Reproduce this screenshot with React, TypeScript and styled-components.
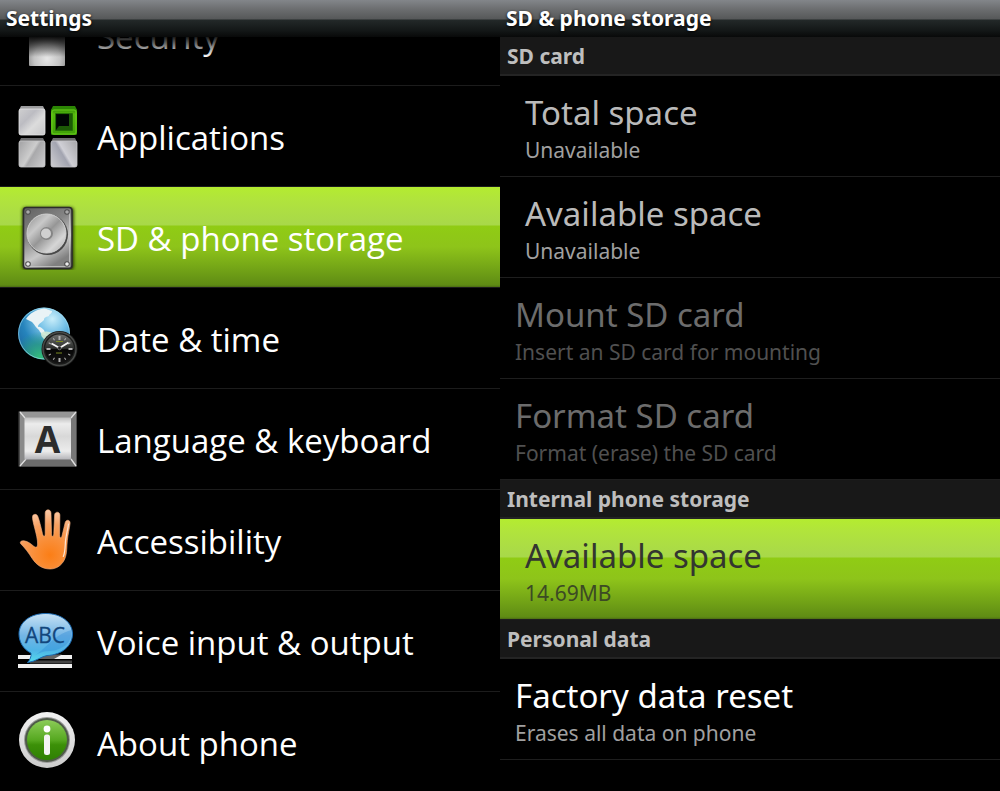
import React from "react";
import styled, { createGlobalStyle, css } from "styled-components";

const GlobalStyle = createGlobalStyle`
  *, *::before, *::after { box-sizing: border-box; }
  body {
    margin: 0;
    background: #000;
    color: #fff;
    font-family: "Noto Sans", "Open Sans", sans-serif;
  }
`;

const greenFill = css`
  background: linear-gradient(
    #b4ec30 0%,
    #b1e43c 12%,
    #a8d84a 38%,
    #90cc14 39%,
    #8ec41a 60%,
    #5f8c14 98%,
    #4c6c14 100%
  );
`;

const Screens = styled.div`
  display: grid;
  grid-template-columns: 1fr 1fr;
  height: 100vh;
  overflow: hidden;
`;

const Screen = styled.section`
  display: flex;
  flex-direction: column;
  min-width: 0;
  min-height: 0;
`;

const TitleBar = styled.h1`
  flex: none;
  height: 37px;
  margin: 0;
  padding-left: 6px;
  font-size: 21px;
  line-height: 36px;
  font-weight: 700;
  color: #fff;
  white-space: nowrap;
  text-shadow: 0 1px 3px #000;
  background: linear-gradient(#83868a 0, #6c6e70 9px, #565859 19px, #232929 20px, #141818 30px, #080909 37px);
`;

const Viewport = styled.div`
  position: relative;
  flex: 1;
  min-height: 0;
  overflow: hidden;
`;

const TopFade = styled.div`
  position: absolute;
  inset: 0 0 auto;
  height: 20px;
  background: linear-gradient(rgba(0, 0, 0, 0.9), rgba(0, 0, 0, 0));
  pointer-events: none;
`;

const MenuList = styled.ul<{ $scrolled?: number }>`
  list-style: none;
  margin: ${(p) => -(p.$scrolled ?? 0)}px 0 0;
  padding: 0;
`;

const MenuButton = styled.button<{ $selected?: boolean }>`
  display: flex;
  align-items: center;
  gap: 17px;
  width: 100%;
  height: 101px;
  padding: 0 0 0 14px;
  border: 0;
  border-bottom: 1px solid #1c1c1c;
  background: #000;
  color: #fff;
  font-family: "Open Sans", "Noto Sans", sans-serif;
  font-size: 33px;
  line-height: 44px;
  text-align: left;
  white-space: nowrap;
  ${(p) => p.$selected && greenFill}
`;

const MenuLabel = styled.span`
  padding-top: 3px;
`;

const Icon = styled.svg`
  flex: none;
  width: 66px;
  height: 66px;
`;

const Category = styled.h2`
  height: 39px;
  margin: 0;
  padding-left: 7px;
  border-bottom: 2px solid #242424;
  background: #181818;
  color: #bebebe;
  font-size: 21px;
  line-height: 38px;
  font-weight: 700;
  white-space: nowrap;
`;

type Tone = "info" | "disabled" | "selected" | "normal";

const tones: Record<Tone, { title: string; note: string; indent: number }> = {
  info: { title: "#bababa", note: "#a0a0a0", indent: 25 },
  disabled: { title: "#6c6c6c", note: "#505050", indent: 15 },
  selected: { title: "#333630", note: "#3c4a24", indent: 25 },
  normal: { title: "#ffffff", note: "#a0a0a0", indent: 15 },
};

const Preference = styled.button<{ $tone: Tone }>`
  display: flex;
  flex-direction: column;
  justify-content: center;
  width: 100%;
  height: 101px;
  padding: 4px 0 0 ${(p) => tones[p.$tone].indent}px;
  border: 0;
  border-bottom: 1px solid #1e1e1e;
  background: #000;
  font: inherit;
  text-align: left;
  white-space: nowrap;
  ${(p) => p.$tone === "selected" && greenFill}
`;

const PrefTitle = styled.span<{ $tone: Tone }>`
  font-size: 33px;
  line-height: 44px;
  color: ${(p) => tones[p.$tone].title};
`;

const PrefNote = styled.span<{ $tone: Tone }>`
  font-size: 21px;
  line-height: 30px;
  color: ${(p) => tones[p.$tone].note};
`;

const SecurityIcon = () => (
  <Icon viewBox="0 0 66 66" aria-hidden="true">
    <defs>
      <radialGradient id="lock" cx="50%" cy="82%" r="60%">
        <stop offset="0" stopColor="#e6e6e6" />
        <stop offset="0.6" stopColor="#c4c4c4" />
        <stop offset="1" stopColor="#8c8c8c" />
      </radialGradient>
    </defs>
    <rect x="15" y="24" width="36" height="40" rx="1" fill="url(#lock)" />
  </Icon>
);

const ApplicationsIcon = () => (
  <Icon viewBox="0 0 66 66" aria-hidden="true">
    <defs>
      <linearGradient id="tileA" x1="0" y1="0" x2="1" y2="1">
        <stop offset="0" stopColor="#cfcfd0" />
        <stop offset="0.35" stopColor="#bcbcc2" />
        <stop offset="0.6" stopColor="#dcdcdc" />
        <stop offset="1" stopColor="#c6c6c8" />
      </linearGradient>
      <linearGradient id="tileB" x1="0" y1="0.2" x2="1" y2="0.8">
        <stop offset="0" stopColor="#a8a8aa" />
        <stop offset="0.45" stopColor="#cdcdcd" />
        <stop offset="0.55" stopColor="#a9a9ab" />
        <stop offset="1" stopColor="#c8c8ca" />
      </linearGradient>
      <linearGradient id="tileC" x1="0" y1="0.8" x2="1" y2="0.2">
        <stop offset="0" stopColor="#c8c8cc" />
        <stop offset="0.45" stopColor="#a2a4b0" />
        <stop offset="0.55" stopColor="#d0d0d6" />
        <stop offset="1" stopColor="#adadb0" />
      </linearGradient>
      <linearGradient id="tileG" x1="0" y1="0" x2="0" y2="1">
        <stop offset="0" stopColor="#2f8c04" />
        <stop offset="0.2" stopColor="#56b80e" />
        <stop offset="1" stopColor="#3fa008" />
      </linearGradient>
    </defs>
    <path d="M7 3h22l2 4v23q0 2-2 2H7q-2 0-2-2V7z" fill="#9c9c9e" />
    <rect x="5" y="6" width="26" height="26" rx="2" fill="url(#tileA)" stroke="#e4e4e6" strokeWidth="0.8" />
    <path d="M39 3h22l2 4v23q0 2-2 2H39q-2 0-2-2V7z" fill="#2c8604" />
    <rect x="37" y="6" width="26" height="26" rx="2" fill="url(#tileG)" />
    <rect x="38" y="7" width="24" height="24" rx="2" fill="none" stroke="#69cc1c" strokeWidth="1" />
    <rect x="41" y="10" width="18" height="18" rx="1" fill="#247204" />
    <rect x="42" y="11" width="16" height="16" fill="#041002" />
    <path d="M42 27l3-4h10V11h3v16z" fill="#1c5a06" />
    <rect x="43" y="12" width="12" height="11" fill="#000604" />
    <path d="M7 35h22l2 4v23q0 2-2 2H7q-2 0-2-2V39z" fill="#6e6e70" />
    <rect x="5" y="38" width="26" height="26" rx="2" fill="url(#tileB)" stroke="#c6c6c8" strokeWidth="0.8" />
    <path d="M39 35h22l2 4v23q0 2-2 2H39q-2 0-2-2V39z" fill="#6e6e70" />
    <rect x="37" y="38" width="26" height="26" rx="2" fill="url(#tileC)" stroke="#c6c6ca" strokeWidth="0.8" />
  </Icon>
);

const StorageIcon = () => (
  <Icon viewBox="0 0 66 66" aria-hidden="true">
    <defs>
      <linearGradient id="driveBody" x1="0" y1="0" x2="0.5" y2="1">
        <stop offset="0" stopColor="#606060" />
        <stop offset="0.45" stopColor="#868686" />
        <stop offset="0.75" stopColor="#c8c8c8" />
        <stop offset="1" stopColor="#808080" />
      </linearGradient>
      <linearGradient id="platter" x1="0" y1="0" x2="1" y2="1">
        <stop offset="0" stopColor="#8c8c8c" />
        <stop offset="0.3" stopColor="#c9c9c9" />
        <stop offset="0.5" stopColor="#969696" />
        <stop offset="0.75" stopColor="#d6d6d6" />
        <stop offset="1" stopColor="#a4a4a4" />
      </linearGradient>
      <filter id="driveShadow" x="-20%" y="-20%" width="140%" height="140%">
        <feGaussianBlur stdDeviation="1.6" />
      </filter>
    </defs>
    <rect x="8" y="3" width="52" height="63" rx="4" fill="#1d2a04" opacity="0.8" filter="url(#driveShadow)" />
    <rect x="9.5" y="3.5" width="48.5" height="61" rx="3" fill="url(#driveBody)" stroke="#2c2c2c" strokeWidth="1.6" />
    <path d="M12 62.500h43.500V7" fill="none" stroke="#c8c8c8" strokeWidth="0.800" />
    <circle cx="33.5" cy="30.5" r="20.5" fill="#484848" />
    <circle cx="32.5" cy="29.5" r="19.5" fill="url(#platter)" stroke="#d2d2d2" strokeWidth="1" />
    <circle cx="32.5" cy="29.5" r="6.5" fill="#858585" />
    <circle cx="32" cy="29.5" r="5" fill="#d0d0d0" />
    {[
      [14, 8],
      [53, 8],
      [14, 60],
      [53, 60],
    ].map(([x, y]) => (
      <g key={`${x}-${y}`}>
        <circle cx={x} cy={y} r="2.8" fill="#4e4e4e" />
        <circle cx={x} cy={y} r="1.8" fill={y > 30 ? "#ececec" : "#a8a8a8"} />
      </g>
    ))}
  </Icon>
);

const DateIcon = () => (
  <Icon viewBox="0 0 66 66" aria-hidden="true">
    <defs>
      <radialGradient id="globe" cx="66%" cy="22%" r="82%">
        <stop offset="0" stopColor="#c9eefa" />
        <stop offset="0.34" stopColor="#74c0e6" />
        <stop offset="0.7" stopColor="#2684bc" />
        <stop offset="1" stopColor="#1c6aa4" />
      </radialGradient>
      <radialGradient id="globeGreen" cx="42%" cy="96%" r="50%">
        <stop offset="0" stopColor="#34c07a" />
        <stop offset="0.5" stopColor="#2c9c84" stopOpacity="0.8" />
        <stop offset="1" stopColor="#2c9c84" stopOpacity="0" />
      </radialGradient>
      <linearGradient id="dial" x1="0" y1="0" x2="0" y2="1">
        <stop offset="0" stopColor="#6a6c6a" />
        <stop offset="0.48" stopColor="#2c2e2c" />
        <stop offset="0.52" stopColor="#060606" />
        <stop offset="1" stopColor="#141414" />
      </linearGradient>
    </defs>
    <circle cx="30" cy="28.5" r="26" fill="url(#globe)" />
    <circle cx="30" cy="28.5" r="26" fill="url(#globeGreen)" />
    <circle cx="30" cy="28.5" r="25.4" fill="none" stroke="#a4e0f0" strokeWidth="1" opacity="0.6" />
    <path
      d="M12 14c4-6 10-9.500 18-10.500 4 .5 5 2 8 2.500 0 3-3 3-3 5-4 1-5 2-5 4-3 3-6 4-6 7 3-1 4 2 6 3 1 4 3 5 5 5-4 2-8-1-10-5-3-2-4-5-7-8-2-1-4-2-6-3z"
      fill="#e9f3f6"
    />
    <path d="M27 28c4-2 8-2 12 1l4 4-8 10c-4-4-3-7-6-10-2-2-2-3-2-5z" fill="#cfe9d4" opacity="0.9" />
    <circle cx="45.500" cy="44" r="18" fill="#1c1d1c" />
    <circle cx="45.500" cy="44" r="16.500" fill="none" stroke="#484a48" strokeWidth="1.400" />
    <circle cx="45.500" cy="44" r="14.500" fill="url(#dial)" />
    {Array.from({ length: 12 }, (_, i) => (
      <path
        key={i}
        d={i % 3 === 0 ? "M45.500 31v4" : "M45.500 31.500v2.500"}
        stroke="#b0b0b0"
        strokeWidth={i % 3 === 0 ? 2 : 1}
        transform={`rotate(${i * 30} 45.500 44)`}
      />
    ))}
    <path d="M37.500 38.500l8 4.500 9-5.500" fill="none" stroke="#f4f4f4" strokeWidth="2" strokeLinejoin="round" />
    <path d="M42 36.500h7M42 48h6" stroke="#7a8a20" strokeWidth="1" />
    <circle cx="45.500" cy="43" r="1.800" fill="#222" stroke="#999" strokeWidth="0.600" />
  </Icon>
);

const LanguageIcon = () => (
  <Icon viewBox="0 0 66 66" aria-hidden="true">
    <defs>
      <linearGradient id="keyFace" x1="0" y1="0" x2="0" y2="1">
        <stop offset="0" stopColor="#c0c0c0" />
        <stop offset="0.15" stopColor="#ececec" />
        <stop offset="0.45" stopColor="#d8d8d8" />
        <stop offset="0.8" stopColor="#ececec" />
        <stop offset="1" stopColor="#b4b4b8" />
      </linearGradient>
    </defs>
    <rect x="4.500" y="5" width="58.500" height="56" rx="1" fill="#4a4a4a" />
    <path d="M6 6h56l-5 6H11z" fill="#969696" />
    <path d="M6 6l5 6v42l-5 6z" fill="#8a8a8a" />
    <path d="M62 6l-5 6v42l5 6z" fill="#777" />
    <path d="M6 60l5-7h46l5 7z" fill="#6c6c6c" />
    <path d="M6 6l5 6M62 6l-5 6M6 60l6-7M62 60l-5-7" stroke="#e0e0e0" strokeWidth="1.300" />
    <rect x="10.500" y="11.500" width="46.500" height="42" rx="1" fill="url(#keyFace)" />
    <text x="33.500" y="47" textAnchor="middle" fontFamily="Open Sans, sans-serif" fontSize="37" fontWeight="700" fill="#2c2c2c">
      A
    </text>
  </Icon>
);

const HandIcon = () => (
  <Icon viewBox="0 0 66 66" aria-hidden="true">
    <defs>
      <radialGradient id="palm" gradientUnits="userSpaceOnUse" cx="36" cy="48" r="44">
        <stop offset="0" stopColor="#fb7e16" />
        <stop offset="0.35" stopColor="#f98e38" />
        <stop offset="0.7" stopColor="#f8a060" />
        <stop offset="1" stopColor="#fbc8a4" />
      </radialGradient>
    </defs>
    <path
      d="M6.500 36.500c-.8-2 1-3 3.500-2.700 4 .4 7.500 3.500 10 5.700 1.800 1.300 3.200.9 3.600-1.500.3-5-1.600-12-3.600-19.500-.8-3.500-1.700-7-1.500-8.800.3-2.800 4-3.200 5.200-.6 1.500 3.700 3 10 4.400 16 .4 2.500 1 4 1.800 4.200 1 .2 1.300-.8 1.300-2.500V6c0-4.200 5.600-4.200 5.800 0l.5 20.500c0 2 .4 2.800 1.100 2.800s1.100-1 1.200-2.600L40.600 8c.2-3.700 5.200-3.700 5.300 0l-.3 19.500c0 2.300.3 3.200 1 3.300.8.100 1.200-1 1.600-2.800l3-12.500c1-3.500 5.200-2.600 4.900.8-.6 5-2.100 11-2.800 17.500-.6 6-.3 11-1.600 15.500-2 7.500-8 12.700-15.500 12.700-8.500 0-14-4.500-18-10.500-3.500-5.500-6.700-10-11.700-15z"
      fill="url(#palm)"
      stroke="#f8b080"
      strokeWidth="0.600"
    />
    <path d="M54.500 17c-1 7-3 13-3.200 20-.2 5-.4 9-2 12.500" fill="none" stroke="#fde4d2" strokeWidth="1.200" strokeLinecap="round" />
  </Icon>
);

const VoiceIcon = () => (
  <Icon viewBox="0 0 66 66" aria-hidden="true">
    <defs>
      <linearGradient id="bubble" x1="0" y1="0" x2="0" y2="1">
        <stop offset="0" stopColor="#c8e2f4" />
        <stop offset="0.45" stopColor="#74b6e6" />
        <stop offset="0.75" stopColor="#4fb4e6" />
        <stop offset="1" stopColor="#54dcec" />
      </linearGradient>
    </defs>
    <path d="M4 47h54v4H4zM4 56h54v4H4z" fill="#f0f0f0" />
    <path d="M24 46.500h24l-8 4.500H17z" fill="#666" />
    <path d="M16 52.500h42v3H16z" fill="#444" />
    <path
      d="M31.800 5.500c15 0 26.700 8.500 26.700 20.500S47.500 47 33 47.500c-5 .6-12 6.500-19.500 7 2.500-2.500 4-6 3.500-9.500C9.500 41.500 5 34 5 26 5 14 16.500 5.500 31.800 5.500z"
      fill="url(#bubble)"
      stroke="#1c6cb4"
      strokeWidth="1"
    />
    <path d="M57.500 22c1 14-10 20-22 21-6 0-10 2-14 4 12-8 18-20 36-25z" fill="#2c86d4" opacity="0.350" />
    <text x="31" y="34.500" textAnchor="middle" fontFamily="Open Sans, sans-serif" fontSize="21" fill="#12467c" stroke="#12467c" strokeWidth="0.300">
      ABC
    </text>
  </Icon>
);

const AboutIcon = () => (
  <Icon viewBox="0 0 66 66" aria-hidden="true">
    <defs>
      <linearGradient id="aboutRing" x1="0" y1="0" x2="0" y2="1">
        <stop offset="0" stopColor="#f2f2f2" />
        <stop offset="1" stopColor="#cccccc" />
      </linearGradient>
      <linearGradient id="aboutFill" x1="0" y1="0" x2="0" y2="1">
        <stop offset="0" stopColor="#8ccc58" />
        <stop offset="0.5" stopColor="#56a820" />
        <stop offset="0.62" stopColor="#3c9008" />
        <stop offset="1" stopColor="#2f8004" />
      </linearGradient>
    </defs>
    <circle cx="33" cy="31" r="28" fill="url(#aboutRing)" />
    <circle cx="33" cy="31" r="23" fill="#9a9a9a" />
    <circle cx="33" cy="31" r="22" fill="#4e5a48" />
    <circle cx="33" cy="31" r="20" fill="url(#aboutFill)" />
    <circle cx="33" cy="20" r="3.400" fill="#fff" />
    <rect x="30" y="25.500" width="6" height="20.500" rx="2.500" fill="#f4f4f4" />
  </Icon>
);

const menu = [
  { label: "Security", icon: <SecurityIcon /> },
  { label: "Applications", icon: <ApplicationsIcon /> },
  { label: "SD & phone storage", icon: <StorageIcon />, selected: true },
  { label: "Date & time", icon: <DateIcon /> },
  { label: "Language & keyboard", icon: <LanguageIcon /> },
  { label: "Accessibility", icon: <HandIcon /> },
  { label: "Voice input & output", icon: <VoiceIcon /> },
  { label: "About phone", icon: <AboutIcon /> },
];

const groups: { name: string; items: { title: string; note: string; tone: Tone }[] }[] = [
  {
    name: "SD card",
    items: [
      { title: "Total space", note: "Unavailable", tone: "info" },
      { title: "Available space", note: "Unavailable", tone: "info" },
      { title: "Mount SD card", note: "Insert an SD card for mounting", tone: "disabled" },
      { title: "Format SD card", note: "Format (erase) the SD card", tone: "disabled" },
    ],
  },
  {
    name: "Internal phone storage",
    items: [{ title: "Available space", note: "14.69MB", tone: "selected" }],
  },
  {
    name: "Personal data",
    items: [{ title: "Factory data reset", note: "Erases all data on phone", tone: "normal" }],
  },
];

export default function App() {
  return (
    <>
      <GlobalStyle />
      <Screens>
        <Screen>
          <TitleBar>Settings</TitleBar>
          <Viewport>
            <MenuList $scrolled={52}>
              {menu.map((item) => (
                <li key={item.label}>
                  <MenuButton type="button" $selected={item.selected}>
                    {item.icon}
                    <MenuLabel>{item.label}</MenuLabel>
                  </MenuButton>
                </li>
              ))}
            </MenuList>
            <TopFade />
          </Viewport>
        </Screen>
        <Screen>
          <TitleBar>SD &amp; phone storage</TitleBar>
          <Viewport>
            {groups.map((group) => (
              <React.Fragment key={group.name}>
                <Category>{group.name}</Category>
                <MenuList>
                  {group.items.map((item) => (
                    <li key={item.title}>
                      <Preference type="button" $tone={item.tone} disabled={item.tone === "disabled"}>
                        <PrefTitle $tone={item.tone}>{item.title}</PrefTitle>
                        <PrefNote $tone={item.tone}>{item.note}</PrefNote>
                      </Preference>
                    </li>
                  ))}
                </MenuList>
              </React.Fragment>
            ))}
          </Viewport>
        </Screen>
      </Screens>
    </>
  );
}
